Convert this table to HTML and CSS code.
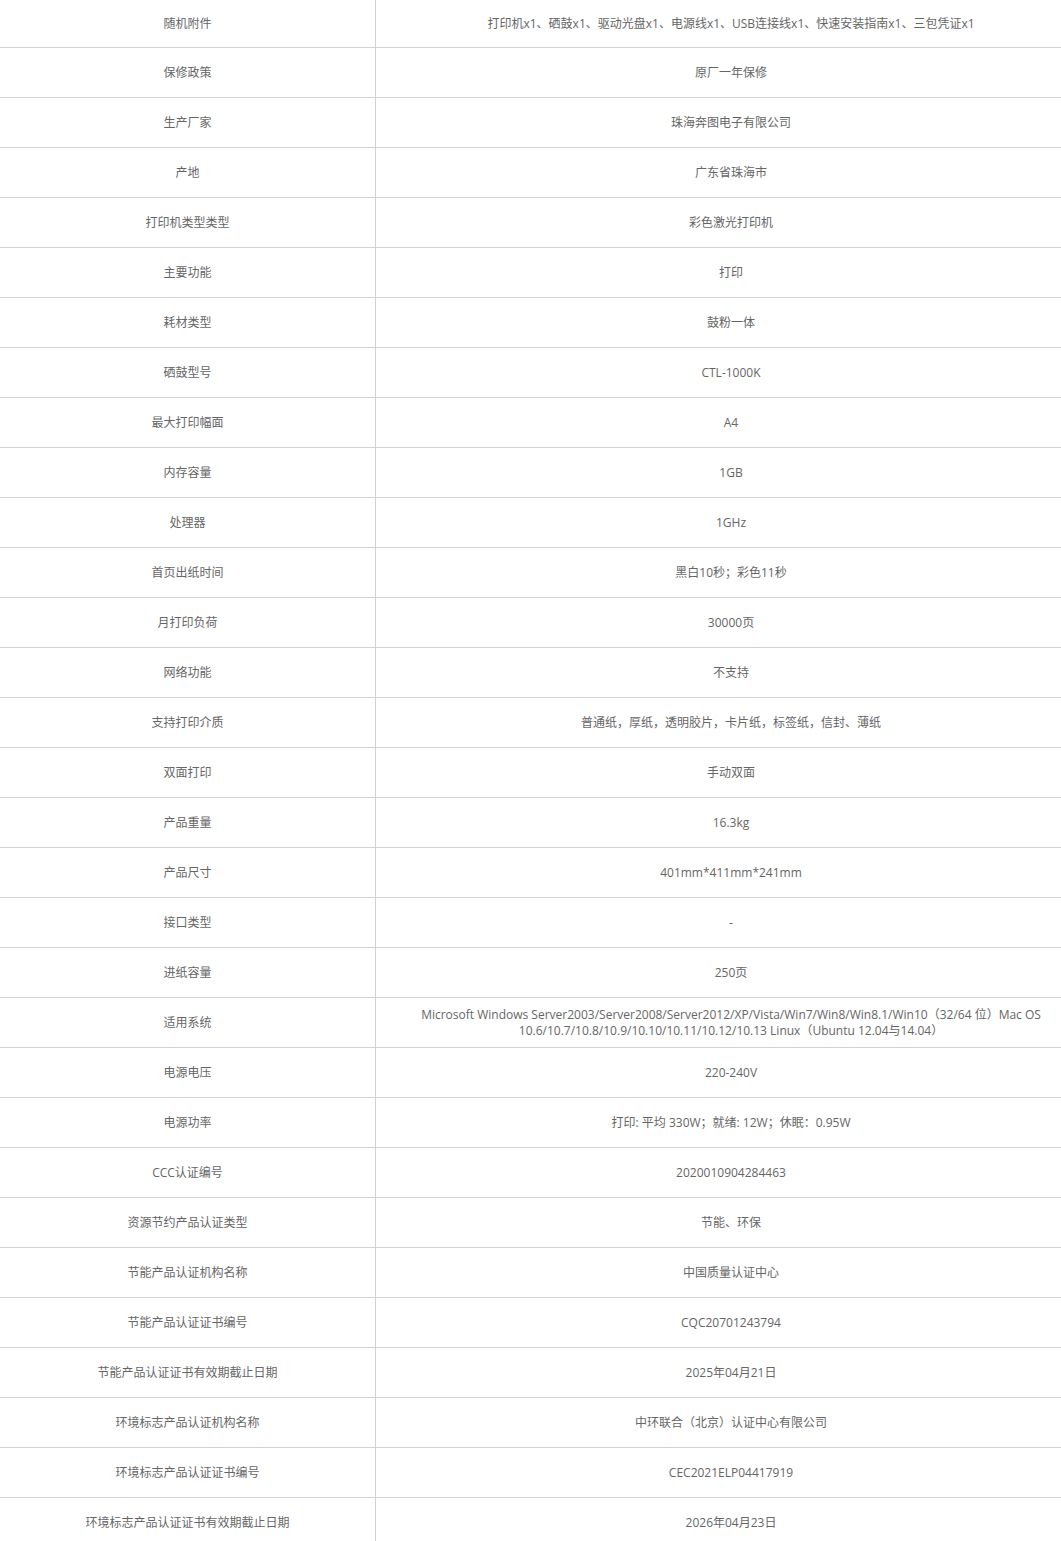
FILE: index.html
```html
<!DOCTYPE html>
<html lang="zh-CN">
<head>
<meta charset="utf-8">
<title>产品参数</title>
<link rel="stylesheet" href="styles.css">
</head>
<body>
<div class="wrap">
<table class="spec">
<tbody>
<tr class="first"><th>随机附件</th><td>打印机x1、硒鼓x1、驱动光盘x1、电源线x1、USB连接线x1、快速安装指南x1、三包凭证x1</td></tr>
<tr><th>保修政策</th><td>原厂一年保修</td></tr>
<tr><th>生产厂家</th><td>珠海奔图电子有限公司</td></tr>
<tr><th>产地</th><td>广东省珠海市</td></tr>
<tr><th>打印机类型类型</th><td>彩色激光打印机</td></tr>
<tr><th>主要功能</th><td>打印</td></tr>
<tr><th>耗材类型</th><td>鼓粉一体</td></tr>
<tr><th>硒鼓型号</th><td>CTL-1000K</td></tr>
<tr><th>最大打印幅面</th><td>A4</td></tr>
<tr><th>内存容量</th><td>1GB</td></tr>
<tr><th>处理器</th><td>1GHz</td></tr>
<tr><th>首页出纸时间</th><td>黑白10秒；彩色11秒</td></tr>
<tr><th>月打印负荷</th><td>30000页</td></tr>
<tr><th>网络功能</th><td>不支持</td></tr>
<tr><th>支持打印介质</th><td>普通纸，厚纸，透明胶片，卡片纸，标签纸，信封、薄纸</td></tr>
<tr><th>双面打印</th><td>手动双面</td></tr>
<tr><th>产品重量</th><td>16.3kg</td></tr>
<tr><th>产品尺寸</th><td>401mm*411mm*241mm</td></tr>
<tr><th>接口类型</th><td>-</td></tr>
<tr><th>进纸容量</th><td>250页</td></tr>
<tr><th>适用系统</th><td>Microsoft Windows Server2003/Server2008/Server2012/XP/Vista/Win7/Win8/Win8.1/Win10（32/64 位）Mac OS<br>10.6/10.7/10.8/10.9/10.10/10.11/10.12/10.13 Linux（Ubuntu 12.04与14.04）</td></tr>
<tr><th>电源电压</th><td>220-240V</td></tr>
<tr><th>电源功率</th><td>打印: 平均 330W；就绪: 12W；休眠：0.95W</td></tr>
<tr><th>CCC认证编号</th><td>2020010904284463</td></tr>
<tr><th>资源节约产品认证类型</th><td>节能、环保</td></tr>
<tr><th>节能产品认证机构名称</th><td>中国质量认证中心</td></tr>
<tr><th>节能产品认证证书编号</th><td>CQC20701243794</td></tr>
<tr><th>节能产品认证证书有效期截止日期</th><td>2025年04月21日</td></tr>
<tr><th>环境标志产品认证机构名称</th><td>中环联合（北京）认证中心有限公司</td></tr>
<tr><th>环境标志产品认证证书编号</th><td>CEC2021ELP04417919</td></tr>
<tr><th>环境标志产品认证证书有效期截止日期</th><td>2026年04月23日</td></tr>
</tbody>
</table>
</div>
</body>
</html>
```
FILE: styles.css
```css
html, body {
  margin: 0;
  padding: 0;
  background: #fff;
}
.wrap {
  width: 1061px;
  overflow: hidden;
}
.spec {
  border-collapse: collapse;
  table-layout: fixed;
  width: 1061px;
  font-family: "Open Sans", "Noto Sans CJK SC", sans-serif;
  font-size: 12px;
  line-height: 16px;
  color: #666;
}
.spec th,
.spec td {
  height: 49px;
  padding: 0;
  text-align: center;
  vertical-align: middle;
  font-weight: normal;
  border-bottom: 1px solid #d2d2d2;
}
.spec th {
  width: 375px;
  border-right: 1px solid #d2d2d2;
}
.spec td {
  padding: 0 5px 0 30px;
}
.spec tr.first th,
.spec tr.first td {
  height: 47px;
}
```
